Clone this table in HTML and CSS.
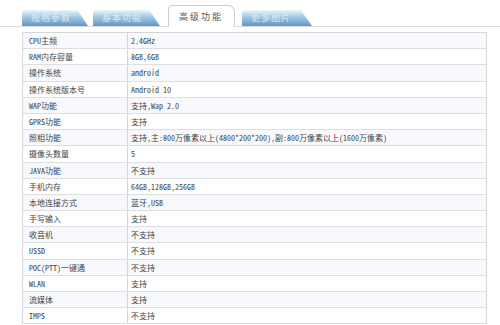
FILE: index.html
```html
<!DOCTYPE html>
<html lang="zh-CN">

<head>
    <meta charset="UTF-8">
    <title>高级功能</title>
    <link rel="stylesheet" href="styles.css">
</head>

<body>
    <ul class="tabs">
        <li class="tab t1">规格参数</li>
        <li class="tab t2">基本功能</li>
        <li class="tab active">高级功能</li>
        <li class="tab t4">更多图片</li>
    </ul>
    <div class="spec">
        <div class="row"><span class="k">CPU主频</span><span class="v">2.4GHz</span></div>
        <div class="row"><span class="k">RAM内存容量</span><span class="v">8GB,6GB</span></div>
        <div class="row"><span class="k">操作系统</span><span class="v">android</span></div>
        <div class="row"><span class="k">操作系统版本号</span><span class="v">Android 10</span></div>
        <div class="row"><span class="k">WAP功能</span><span class="v">支持,Wap 2.0</span></div>
        <div class="row"><span class="k">GPRS功能</span><span class="v">支持</span></div>
        <div class="row"><span class="k">照相功能</span><span class="v">支持,主:800万像素以上(4800*200*200),副:800万像素以上(1600万像素)</span></div>
        <div class="row"><span class="k">摄像头数量</span><span class="v">5</span></div>
        <div class="row"><span class="k">JAVA功能</span><span class="v">不支持</span></div>
        <div class="row"><span class="k">手机内存</span><span class="v">64GB,128GB,256GB</span></div>
        <div class="row"><span class="k">本地连接方式</span><span class="v">蓝牙,USB</span></div>
        <div class="row"><span class="k">手写输入</span><span class="v">支持</span></div>
        <div class="row"><span class="k">收音机</span><span class="v">不支持</span></div>
        <div class="row"><span class="k">USSD</span><span class="v">不支持</span></div>
        <div class="row"><span class="k">POC(PTT)一键通</span><span class="v">不支持</span></div>
        <div class="row"><span class="k">WLAN</span><span class="v">支持</span></div>
        <div class="row"><span class="k">流媒体</span><span class="v">支持</span></div>
        <div class="row"><span class="k">IMPS</span><span class="v">不支持</span></div>
    </div>
</body>

</html>
```
FILE: styles.css
```css
* {
    margin: 0;
    padding: 0;
}

li {
    list-style: none;
}

body {
    background: #fff;
    font-family: "Noto Sans Mono CJK SC", "Noto Sans CJK SC", sans-serif;
    font-size: 8px;
    color: #444;
    overflow: hidden;
}

.tabs {
    display: flex;
    align-items: flex-end;
    height: 26px;
    padding-left: 22px;
    border-bottom: 1px solid #dcdcdc;
}

.tab {
    height: 16px;
    line-height: 16px;
    font-size: 9px;
    letter-spacing: 1px;
    color: #dce8f3;
    padding-left: 9px;
    background: linear-gradient(#eef5fa, #a9cbe4 40%, #5f98c6);
    border-radius: 4px 0 0 0;
    clip-path: polygon(0 0, 84% 0, 100% 100%, 0 100%);
}

.t1 {
    width: 57px;
}

.t2 {
    width: 58px;
    margin-left: 5px;
}

.t4 {
    width: 61px;
    margin-left: 7px;
}

.tab.active {
    width: 55px;
    height: 21px;
    line-height: 21px;
    margin-left: 8px;
    margin-bottom: -1px;
    padding-left: 10px;
    background: #fff;
    color: #555;
    letter-spacing: 2px;
    border: 1px solid #cfcfcf;
    border-bottom: none;
    border-radius: 4px 7px 0 0;
    clip-path: none;
}

.spec {
    margin: 5px 13px 0 22px;
    border: 1px solid #d6d6d6;
    border-bottom: none;
}

.row {
    display: flex;
    height: 15.2px;
    line-height: 15.2px;
    border-bottom: 1px solid #dedede;
}

.row:nth-child(odd) {
    background: #f7f9fc;
}

.k {
    width: 98px;
    padding-left: 6px;
    border-right: 1px solid #d6d6d6;
}

.v {
    padding-left: 3px;
    white-space: nowrap;
}
```
